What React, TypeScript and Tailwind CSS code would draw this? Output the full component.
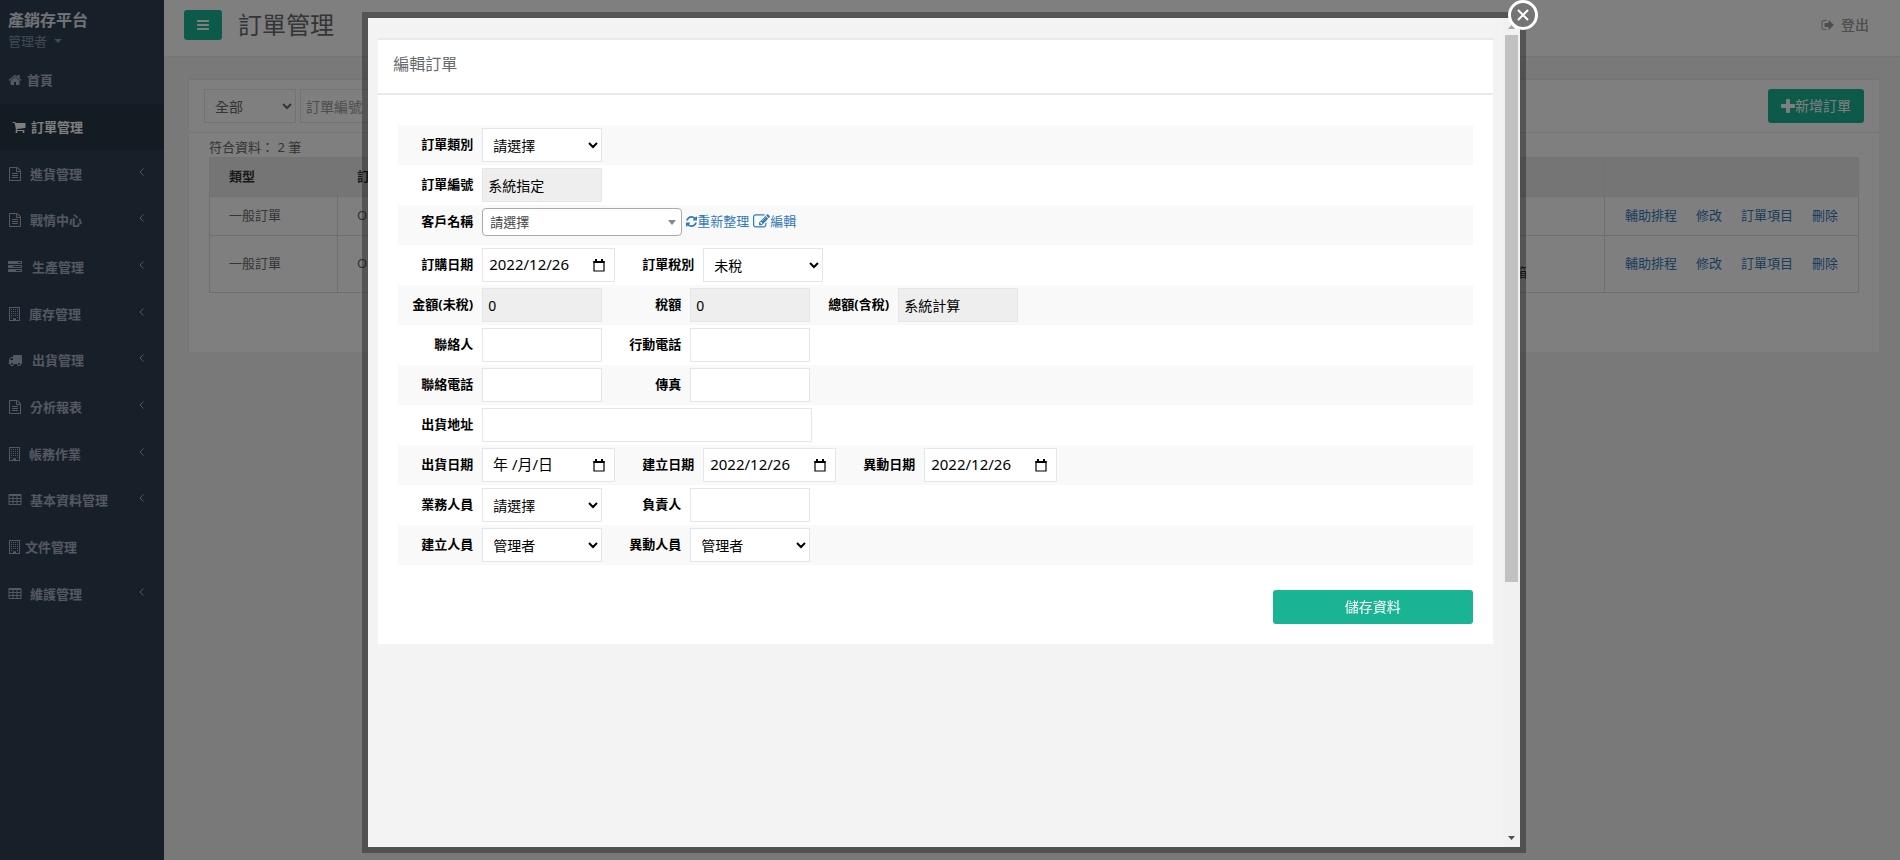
// App.tsx
import React from 'react';

interface IconProps {
  d: string;
  className?: string;
  viewBox?: string;
}

const Icon: React.FC<IconProps> = ({ d, className = 'size-[14px]', viewBox = '0 0 1792 1792' }) => (
  <svg viewBox={viewBox} fill="currentColor" aria-hidden="true" className={`shrink-0 ${className}`}>
    <path d={d} />
  </svg>
);

const CELL = 'q0-14-9-23t-23-9h-320q-14 0-23 9t-9 23v192q0 14 9 23t23 9h320q14 0 23-9t9-23z';

const icons = {
  home: 'M1472 992v480q0 26-19 45t-45 19h-384v-384h-256v384h-384q-26 0-45-19t-19-45v-480q0-1 .5-3t.5-3l575-474 575 474q1 2 1 6zm223-69l-62 74q-8 9-21 11h-3q-13 0-21-7l-692-577-692 577q-12 8-24 7-13-2-21-11l-62-74q-8-10-7-23.5t11-21.5l719-599q32-26 76-26t76 26l244 204v-195q0-14 9-23t23-9h192q14 0 23 9t9 23v408l219 182q10 8 11 21.5t-7 23.5z',
  cart: 'M704 1536q0 52-38 90t-90 38-90-38-38-90 38-90 90-38 90 38 38 90zm896 0q0 52-38 90t-90 38-90-38-38-90 38-90 90-38 90 38 38 90zm128-1088v512q0 24-16.5 42.5t-40.5 21.5l-1044 122q13 60 13 70 0 16-24 64h920q26 0 45 19t19 45-19 45-45 19h-1024q-26 0-45-19t-19-45q0-11 8-31.5t16-36 21.5-40 15.5-29.5l-177-823h-204q-26 0-45-19t-19-45 19-45 45-19h256q16 0 28.5 6.5t19.5 15.5 13 24.5 8 26 5.5 29.5 4.5 26h1201q26 0 45 19t19 45z',
  file: 'M1596 380q28 28 48 76t20 88v1152q0 40-28 68t-68 28h-1344q-40 0-68-28t-28-68v-1600q0-40 28-68t68-28h896q40 0 88 20t76 48zm-444-244v376h376q-10-29-22-41l-313-313q-12-12-41-22zm384 1528v-1024h-416q-40 0-68-28t-28-68v-416h-768v1536h1280zm-1024-864q0-14 9-23t23-9h704q14 0 23 9t9 23v64q0 14-9 23t-23 9h-704q-14 0-23-9t-9-23v-64zm736 224q14 0 23 9t9 23v64q0 14-9 23t-23 9h-704q-14 0-23-9t-9-23v-64q0-14 9-23t23-9h704zm0 256q14 0 23 9t9 23v64q0 14-9 23t-23 9h-704q-14 0-23-9t-9-23v-64q0-14 9-23t23-9h704z',
  tasks: 'M1024 1408h640v-128h-640v128zm-384-512h1024v-128h-1024v128zm640-512h384v-128h-384v128zm512 832v256q0 26-19 45t-45 19h-1664q-26 0-45-19t-19-45v-256q0-26 19-45t45-19h1664q26 0 45 19t19 45zm0-512v256q0 26-19 45t-45 19h-1664q-26 0-45-19t-19-45v-256q0-26 19-45t45-19h1664q26 0 45 19t19 45zm0-512v256q0 26-19 45t-45 19h-1664q-26 0-45-19t-19-45v-256q0-26 19-45t45-19h1664q26 0 45 19t19 45z',
  building:
    'M128 0h1408v1792H128zM256 128v1536h384v-224h384v224h384V128z' +
    'M384 256h128v128H384zM640 256h128v128H640zM896 256h128v128H896zM1152 256h128v128H1152z' +
    'M384 512h128v128H384zM640 512h128v128H640zM896 512h128v128H896zM1152 512h128v128H1152z' +
    'M384 768h128v128H384zM640 768h128v128H640zM896 768h128v128H896zM1152 768h128v128H1152z' +
    'M384 1024h128v128H384zM640 1024h128v128H640zM896 1024h128v128H896zM1152 1024h128v128H1152z' +
    'M384 1280h128v128H384zM1152 1280h128v128H1152z',
  truck: 'M640 1408q0-52-38-90t-90-38-90 38-38 90 38 90 90 38 90-38 38-90zm-384-512h384v-256h-158q-13 0-22 9l-195 195q-9 9-9 22v30zm1280 512q0-52-38-90t-90-38-90 38-38 90 38 90 90 38 90-38 38-90zm256-1088v1024q0 15-4 26.5t-13.5 18.5-16.5 11.5-23.5 6-22.5 2-25.5 0-22.5-.5q0 106-75 181t-181 75-181-75-75-181h-384q0 106-75 181t-181 75-181-75-75-181h-64q-3 0-22.5.5t-25.5 0-22.5-2-23.5-6-16.5-11.5-13.5-18.5-4-26.5q0-26 19-45t45-19v-320q0-8-.5-35t0-38 2.5-34.5 6.5-37 14-30.5 22.5-30l198-198q19-19 50.5-32t58.5-13h160v-192q0-26 19-45t45-19h1024q26 0 45 19t19 45z',
  table:
    ['M576 1376', 'M576 992', 'M1088 1376', 'M576 608', 'M1088 992', 'M1600 1376', 'M1088 608', 'M1600 992', 'M1600 608']
      .map((start) => `${start}v-192${CELL}`)
      .join('') +
    'M1728 288v1088q0 66-47 113t-113 47h-1344q-66 0-113-47t-47-113v-1088q0-66 47-113t113-47h1344q66 0 113 47t47 113z',
  bars: 'M1664 1344v128q0 26-19 45t-45 19h-1408q-26 0-45-19t-19-45v-128q0-26 19-45t45-19h1408q26 0 45 19t19 45zm0-512v128q0 26-19 45t-45 19h-1408q-26 0-45-19t-19-45v-128q0-26 19-45t45-19h1408q26 0 45 19t19 45zm0-512v128q0 26-19 45t-45 19h-1408q-26 0-45-19t-19-45v-128q0-26 19-45t45-19h1408q26 0 45 19t19 45z',
  plus: 'M1600 736v192q0 40-28 68t-68 28h-416v416q0 40-28 68t-68 28h-192q-40 0-68-28t-28-68v-416h-416q-40 0-68-28t-28-68v-192q0-40 28-68t68-28h416v-416q0-40 28-68t68-28h192q40 0 68 28t28 68v416h416q40 0 68 28t28 68z',
  signOut: 'M704 1440q0 4 1 20t.5 26.5-3 23.5-10 19.5-20.5 6.5h-320q-119 0-203.5-84.5t-84.5-203.5v-704q0-119 84.5-203.5t203.5-84.5h320q13 0 22.5 9.5t9.5 22.5q0 4 1 20t.5 26.5-3 23.5-10 19.5-20.5 6.5h-320q-66 0-113 47t-47 113v704q0 66 47 113t113 47h312l11.5 1 11.5 3 8 5.5 7 9 2 13.5zm928-544q0 26-19 45l-544 544q-19 19-45 19t-45-19-19-45v-288h-448q-26 0-45-19t-19-45v-384q0-26 19-45t45-19h448v-288q0-26 19-45t45-19 45 19l544 544q19 19 19 45z',
  refresh: 'M1639 1056q0 5-1 7-64 268-268 434.5t-478 166.5q-146 0-282.5-55t-243.5-157l-129 129q-19 19-45 19t-45-19-19-45v-448q0-26 19-45t45-19h448q26 0 45 19t19 45-19 45l-137 137q71 66 161 102t187 36q134 0 250-65t186-179q11-17 53-117 8-23 30-23h192q13 0 22.5 9.5t9.5 22.5zm25-800v448q0 26-19 45t-45 19h-448q-26 0-45-19t-19-45 19-45l138-138q-148-137-349-137-134 0-250 65t-186 179q-11 17-53 117-8 23-30 23h-199q-13 0-22.5-9.5t-9.5-22.5v-7q65-268 270-434.5t480-166.5q146 0 284 55.5t245 156.5l130-129q19-19 45-19t45 19 19 45z',
  edit: 'M888 1184l116-116-152-152-116 116v56h96v96h56zm440-720q-16-16-33 1l-350 350q-17 17-1 33t33-1l350-350q17-17 1-33zm80 594v190q0 119-84.5 203.5t-203.5 84.5h-832q-119 0-203.5-84.5t-84.5-203.5v-832q0-119 84.5-203.5t203.5-84.5h832q63 0 117 25 15 7 18 23 3 17-9 29l-49 49q-14 14-32 8-23-6-45-6h-832q-66 0-113 47t-47 113v832q0 66 47 113t113 47h832q66 0 113-47t47-113v-126q0-13 9-22l64-64q15-15 35-7t20 29zm-96-738l288 288-672 672h-288v-288zm444 132l-92 92-288-288 92-92q28-28 68-28t68 28l152 152q28 28 28 68t-28 68z',
};

interface MenuItem {
  label: string;
  icon: string;
  gap: string;
  active?: boolean;
  expandable?: boolean;
}

const menu: MenuItem[] = [
  { label: '首頁', icon: icons.home, gap: 'gap-[5px]' },
  { label: '訂單管理', icon: icons.cart, gap: 'gap-[5px]', active: true },
  { label: '進貨管理', icon: icons.file, gap: 'gap-2', expandable: true },
  { label: '戰情中心', icon: icons.file, gap: 'gap-2', expandable: true },
  { label: '生產管理', icon: icons.tasks, gap: 'gap-[10px]', expandable: true },
  { label: '庫存管理', icon: icons.building, gap: 'gap-[7px]', expandable: true },
  { label: '出貨管理', icon: icons.truck, gap: 'gap-[10px]', expandable: true },
  { label: '分析報表', icon: icons.file, gap: 'gap-2', expandable: true },
  { label: '帳務作業', icon: icons.building, gap: 'gap-[7px]', expandable: true },
  { label: '基本資料管理', icon: icons.table, gap: 'gap-2', expandable: true },
  { label: '文件管理', icon: icons.building, gap: 'gap-[3px]' },
  { label: '維護管理', icon: icons.table, gap: 'gap-2', expandable: true },
];

const Sidebar: React.FC = () => (
  <nav className="w-[164px] shrink-0 bg-[#2f4050] text-[#a7b1c2]">
    <header className="flex h-[57px] flex-col px-2 pt-2">
      <strong className="text-base leading-6 text-[#dfe4ed]">產銷存平台</strong>
      <button className="flex items-center gap-[7px] text-[#8095a8] leading-[18px]">
        管理者
        <svg viewBox="0 0 8 4" fill="currentColor" className="h-1 w-2" aria-hidden="true">
          <path d="M0 0h8L4 4z" />
        </svg>
      </button>
    </header>
    <ul className="grid h-[560px] auto-rows-fr font-bold">
      {menu.map((item) => (
        <li key={item.label}>
          <a
            href="#"
            className={`flex h-full items-center pr-5 ${item.gap} ${item.active ? 'bg-[#293846] pl-3 text-white' : 'pl-2'}`}
          >
            <Icon d={item.icon} />
            {item.label}
            {item.expandable && (
              <svg viewBox="0 0 5 8" fill="none" stroke="currentColor" className="mb-1 ml-auto h-2 w-[5px]" aria-hidden="true">
                <path d="M4.5.5 1 4l3.5 3.5" />
              </svg>
            )}
          </a>
        </li>
      ))}
    </ul>
  </nav>
);

const orders = [
  { type: '一般訂單', no: 'O', unit: '', height: 'h-[39px]' },
  { type: '一般訂單', no: 'O', unit: '箱', height: 'h-[57px]' },
];
const actions = ['輔助排程', '修改', '訂單項目', '刪除'];

const OrderPage: React.FC = () => (
  <div className="min-w-0 flex-1">
    <header className="flex h-[57px] items-center border-b border-[#e7eaec] bg-white pr-[31px] pb-[6px] pl-5">
      <button aria-label="選單" className="flex h-[30px] w-[38px] items-center justify-center rounded-[3px] bg-[#1ab394] text-white">
        <Icon d={icons.bars} />
      </button>
      <h1 className="ml-4 text-2xl leading-8">訂單管理</h1>
      <a href="#" className="ml-auto flex items-center gap-[6px] text-sm font-medium text-[#999c9e]">
        <Icon d={icons.signOut} />
        登出
      </a>
    </header>
    <main className="pt-[21px] pr-[21px] pl-[25px]">
      <section className="h-[274px] border-t-2 border-[#e7eaec] bg-white">
        <div className="flex h-[53px] items-center gap-1 border-b border-[#e7eaec] px-[15px]">
          <select aria-label="狀態" className="h-[34px] w-[92px] border border-[#e5e6e7] bg-white px-[6px] text-sm">
            <option>全部</option>
          </select>
          <input aria-label="訂單編號" placeholder="訂單編號" className="h-[34px] w-40 border border-[#e5e6e7] px-[5px] text-sm placeholder:text-[#999]" />
          <button className="ml-auto flex h-[34px] w-24 items-center justify-center rounded-[3px] bg-[#1ab394] text-sm text-white">
            <Icon d={icons.plus} viewBox="192 128 1408 1408" />
            新增訂單
          </button>
        </div>
        <div className="px-5 pt-1">
          <p className="h-5 leading-5">符合資料： 2 筆</p>
          <table className="w-full table-fixed border-collapse border border-[#e7e7e7]">
            <thead>
              <tr className="h-[39px] bg-[#ebebeb] text-left text-[#333]">
                <th className="w-[128px] border border-[#e7e7e7] px-[19px] pb-[2px]">類型</th>
                <th className="border border-[#e7e7e7] px-[19px] pb-[2px]">訂單編號</th>
                <th className="w-[110px] border border-[#e7e7e7] px-[19px]" />
                <th className="w-[254px] border border-[#e7e7e7] px-[19px]" />
              </tr>
            </thead>
            <tbody>
              {orders.map((order, i) => (
                <tr key={i} className={order.height}>
                  <td className="border border-[#ddd] px-[19px] pb-[2px]">{order.type}</td>
                  <td className="border border-[#ddd] px-[19px] pb-[2px]">{order.no}</td>
                  <td className="border border-[#ddd] px-[19px] pt-4 text-[#333]">{order.unit}</td>
                  <td className="border border-[#ddd] px-5 pb-[2px]">
                    <div className="flex gap-[19px] text-[#337ab7]">
                      {actions.map((action) => (
                        <a key={action} href="#">{action}</a>
                      ))}
                    </div>
                  </td>
                </tr>
              ))}
            </tbody>
          </table>
        </div>
      </section>
    </main>
  </div>
);

interface FieldProps {
  id: string;
  label: string;
  value?: string;
  kind?: 'text' | 'select' | 'date';
  readOnly?: boolean;
  wide?: boolean;
}

const Field: React.FC<FieldProps> = ({ id, label, value = '', kind = 'text', readOnly, wide }) => (
  <div className="flex items-center">
    <label htmlFor={id} className="w-[84px] pr-[9px] pb-[2px] text-right font-bold">{label}</label>
    {kind === 'select' && (
      <select id={id} className="h-[34px] w-[120px] border border-[#e5e6e7] bg-white px-[6px] text-sm">
        <option>{value}</option>
      </select>
    )}
    {kind === 'date' && (
      <div className="flex h-[34px] w-[133px] items-center justify-between border border-[#e5e6e7] bg-white pr-[9px] pl-[6px]">
        <input id={id} defaultValue={value} className="w-[86px] pb-[2px] text-[15px]" />
        <svg viewBox="0 0 12 13" fill="none" stroke="currentColor" className="h-[13px] w-3" aria-hidden="true">
          <path d="M1 2.5h10v9.5H1z" strokeWidth="1.2" />
          <path d="M.5 3h11M3 0v2M9 0v2" strokeWidth="2" />
        </svg>
      </div>
    )}
    {kind === 'text' && (
      <input
        id={id}
        defaultValue={value}
        readOnly={readOnly}
        className={`h-[34px] border border-[#e5e6e7] px-[5px] text-sm ${readOnly ? 'bg-[#eee]' : 'bg-white'} ${wide ? 'w-[330px]' : 'w-[120px]'}`}
      />
    )}
  </div>
);

const Row: React.FC<{ children: React.ReactNode }> = ({ children }) => (
  <div className="flex h-10 items-center gap-1 odd:bg-[#f9f9f9]">{children}</div>
);

const OrderForm: React.FC = () => (
  <form className="px-5 pt-[30px] pb-5 text-black">
    <div>
      <Row>
        <Field id="category" label="訂單類別" kind="select" value="請選擇" />
      </Row>
      <Row>
        <Field id="no" label="訂單編號" value="系統指定" readOnly />
      </Row>
      <div className="flex h-10 items-start pt-[3px] odd:bg-[#f9f9f9]">
        <label htmlFor="customer" className="w-[84px] pr-[9px] text-right font-bold leading-[26px]">客戶名稱</label>
        <div className="grid w-[200px]">
          <select
            id="customer"
            className="col-start-1 row-start-1 h-7 appearance-none rounded border border-[#aaa] bg-white px-[7px] text-[#444]"
          >
            <option>請選擇</option>
          </select>
          <svg viewBox="0 0 8 5" fill="#888" className="pointer-events-none col-start-1 row-start-1 mr-[6px] h-[5px] w-2 self-center justify-self-end" aria-hidden="true">
            <path d="M0 0h8L4 5z" />
          </svg>
        </div>
        <div className="flex gap-1 pl-1 leading-[26px] text-[#337ab7]">
          <a href="#" className="flex items-center">
            <Icon d={icons.refresh} viewBox="128 128 1536 1536" className="size-[11px]" />
            重新整理
          </a>
          <a href="#" className="flex items-center">
            <Icon d={icons.edit} className="size-[17px]" />
            編輯
          </a>
        </div>
      </div>
      <Row>
        <Field id="orderDate" label="訂購日期" kind="date" value="2022/12/26" />
        <Field id="taxType" label="訂單稅別" kind="select" value="未稅" />
      </Row>
      <Row>
        <Field id="amount" label="金額(未稅)" value="0" readOnly />
        <Field id="tax" label="稅額" value="0" readOnly />
        <Field id="total" label="總額(含稅)" value="系統計算" readOnly />
      </Row>
      <Row>
        <Field id="contact" label="聯絡人" />
        <Field id="mobile" label="行動電話" />
      </Row>
      <Row>
        <Field id="phone" label="聯絡電話" />
        <Field id="fax" label="傳真" />
      </Row>
      <Row>
        <Field id="address" label="出貨地址" wide />
      </Row>
      <Row>
        <Field id="shipDate" label="出貨日期" kind="date" value=" 年 /月/日" />
        <Field id="createdAt" label="建立日期" kind="date" value="2022/12/26" />
        <Field id="updatedAt" label="異動日期" kind="date" value="2022/12/26" />
      </Row>
      <Row>
        <Field id="sales" label="業務人員" kind="select" value="請選擇" />
        <Field id="owner" label="負責人" />
      </Row>
      <Row>
        <Field id="createdBy" label="建立人員" kind="select" value="管理者" />
        <Field id="updatedBy" label="異動人員" kind="select" value="管理者" />
      </Row>
    </div>
    <button type="button" className="mt-[25px] ml-auto block h-[34px] w-[200px] rounded-[3px] bg-[#1ab394] text-sm text-white">
      儲存資料
    </button>
  </form>
);

const EditOrderModal: React.FC = () => (
  <div className="fixed inset-0 flex justify-center bg-black/50 pt-[18px] pr-3 pb-[13px]">
    <div role="dialog" aria-label="編輯訂單" className="relative flex w-[61%] bg-[#f3f3f4] shadow-[0_0_0_6px_rgba(0,0,0,0.33)]">
      <div className="min-w-0 flex-1 px-[10px] pt-5">
        <section className="border-t-2 border-[#e7eaec] bg-white">
          <h2 className="h-[55px] border-b-2 border-[#e7eaec] px-[15px] pt-3 text-base leading-6">編輯訂單</h2>
          <OrderForm />
        </section>
      </div>
      <div className="flex w-[17px] flex-col items-center bg-[#f1f1f1]" aria-hidden="true">
        <svg viewBox="0 0 7 4" fill="#a3a3a3" className="mt-[7px] mb-[6px] h-1 w-[7px]">
          <path d="M0 4h7L3.5 0z" />
        </svg>
        <div className="h-[66%] w-[13px] bg-[#c1c1c1]" />
        <svg viewBox="0 0 7 4" fill="#505050" className="mt-auto mb-[7px] h-1 w-[7px]">
          <path d="M0 0h7L3.5 4z" />
        </svg>
      </div>
      <button
        aria-label="關閉"
        className="absolute -top-[18px] -right-[18px] flex size-[30px] items-center justify-center rounded-full border-[3px] border-white bg-[#747474] text-white"
      >
        <svg viewBox="0 0 12 12" fill="none" stroke="currentColor" strokeWidth="2" className="size-3" aria-hidden="true">
          <path d="M1 1l10 10M11 1L1 11" />
        </svg>
      </button>
    </div>
  </div>
);

const App: React.FC = () => (
  <div className="flex min-h-screen bg-[#f3f3f4] font-['Noto_Sans','Noto_Sans_CJK_TC',sans-serif] text-[13px] leading-[18px] text-[#676a6c]">
    <Sidebar />
    <OrderPage />
    <EditOrderModal />
  </div>
);

export default App;
